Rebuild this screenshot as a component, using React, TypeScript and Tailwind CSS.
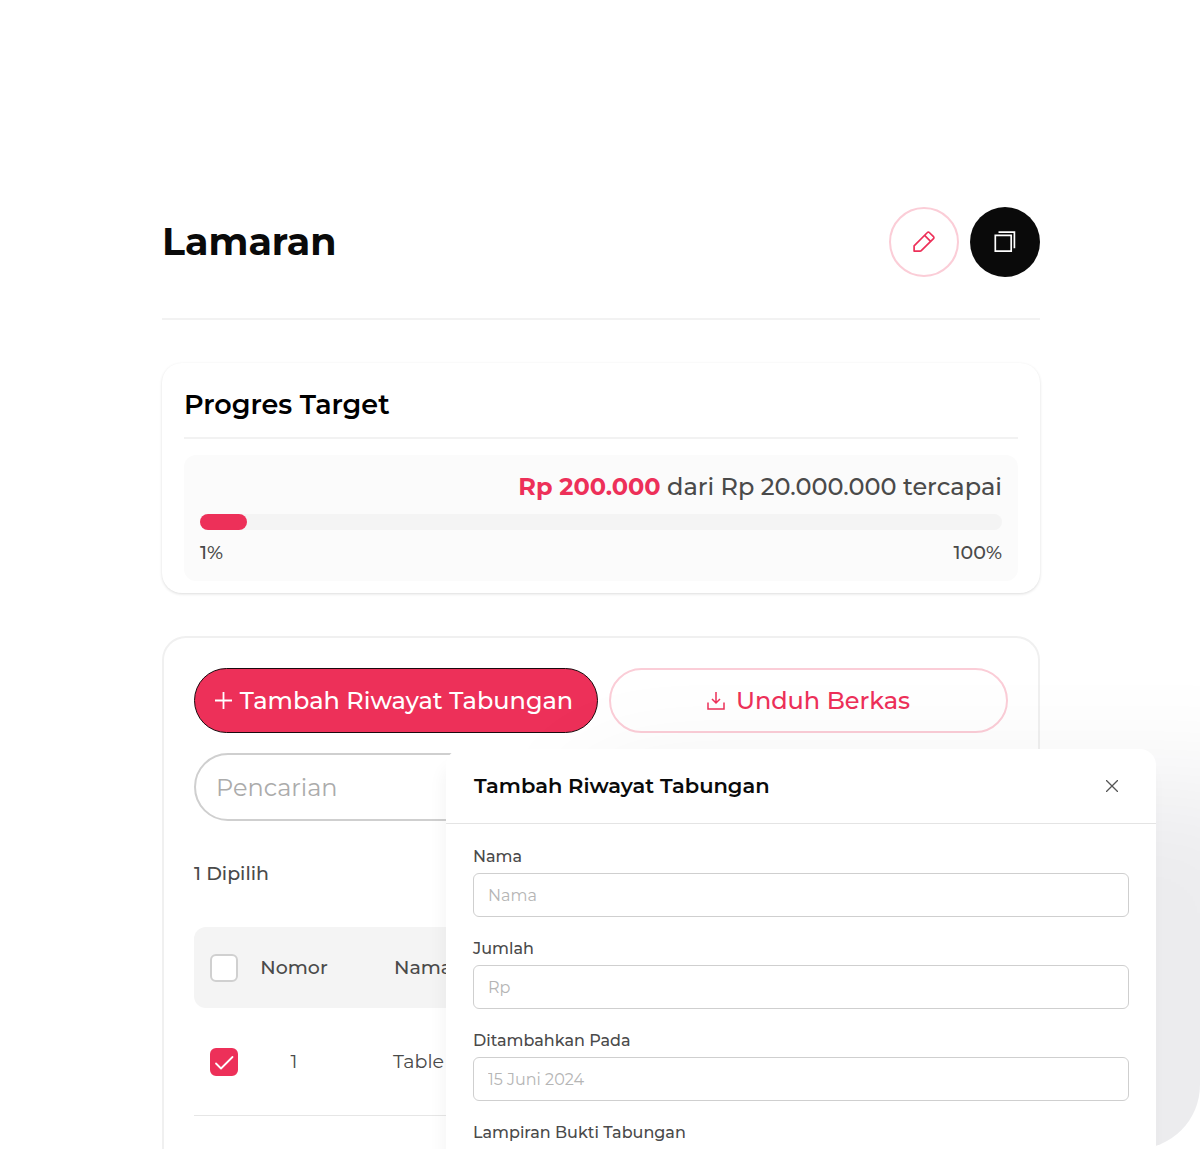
import { useState } from 'react'

type Row = {
  id: number
  name: string
}

const rows: Row[] = [{ id: 1, name: 'Table' }]

const fields = [
  { id: 'nama', label: 'Nama', placeholder: 'Nama' },
  { id: 'jumlah', label: 'Jumlah', placeholder: 'Rp' },
  { id: 'tanggal', label: 'Ditambahkan Pada', placeholder: '15 Juni 2024' },
]

function PencilIcon() {
  return (
    <svg width="24" height="24" viewBox="0 0 24 24" fill="none" stroke="currentColor" strokeWidth="1.7" strokeLinejoin="round">
      <path d="M2.100 20.900v-5.100L15.400 2.500a1.300 1.300 0 0 1 1.900 0l4.200 4.200a1.300 1.300 0 0 1 0 1.900L9 20.900a1.500 1.500 0 0 1-.8.300H2.400a.3.3 0 0 1-.3-.3Z" />
      <path d="m12.600 5.300 6 6" />
    </svg>
  )
}

function CopyIcon() {
  return (
    <svg width="24" height="24" viewBox="0 0 24 24" fill="none" stroke="currentColor" strokeWidth="1.700">
      <path d="M2.300 5.300h15.900v15.900H2.300Z" />
      <path d="M5.500 2.200h15.900v16" />
    </svg>
  )
}

function Checkbox({ checked, onChange, label }: { checked: boolean; onChange: () => void; label: string }) {
  return (
    <span className="relative block size-7">
      <input
        type="checkbox"
        aria-label={label}
        checked={checked}
        onChange={onChange}
        className="block size-7 appearance-none rounded-md border-2 border-[#d0d0d0] bg-white checked:border-[#ed3059] checked:bg-[#ed3059]"
      />
      {checked && (
        <svg className="pointer-events-none absolute inset-0 text-white" width="28" height="28" viewBox="0 0 28 28" fill="none" stroke="currentColor" strokeWidth="1.800" strokeLinecap="round" strokeLinejoin="round">
          <path d="m6 15.500 5 5L22.500 9" />
        </svg>
      )}
    </span>
  )
}

export default function App() {
  const [selected, setSelected] = useState<number[]>([1])

  const toggle = (id: number) => {
    setSelected(selected.includes(id) ? selected.filter(s => s !== id) : [...selected, id])
  }

  return (
    <main className="relative flex min-h-screen flex-col overflow-hidden rounded-br-[64px] bg-white pt-[207px] pr-40 pl-[162px] font-['Montserrat','Inter',sans-serif] text-[#4a4a4a]">
      <header className="flex items-center justify-between border-b-2 border-[#f2f2f2] pb-[41px]">
        <h1 className="text-[38px] leading-[48px] font-bold text-[#0a0a0a]">Lamaran</h1>
        <div className="flex gap-[11px]">
          <button aria-label="Ubah" className="flex size-[70px] items-center justify-center rounded-full border-2 border-[#fbcdd7] text-[#ed3059]">
            <PencilIcon />
          </button>
          <button aria-label="Salin" className="flex size-[70px] items-center justify-center rounded-full bg-[#0a0a0a] text-white">
            <CopyIcon />
          </button>
        </div>
      </header>

      <section className="mt-[43px] rounded-[20px] bg-white px-[22px] pt-6 pb-3 shadow-[0_1px_3px_rgba(0,0,0,0.14)]">
        <h2 className="border-b-2 border-[#f2f2f2] pb-[14px] text-[27px] leading-9 font-semibold text-black">Progres Target</h2>
        <div className="mt-4 rounded-xl bg-[#fbfbfb] px-4 pt-4 pb-[14px]">
          <p className="text-right text-[24px] leading-8 font-medium">
            <strong className="font-bold text-[#ed3059]">Rp 200.000</strong> dari Rp 20.000.000 tercapai
          </p>
          <div className="mt-[11px] h-4 rounded-full bg-[#f4f4f4]">
            <div className="h-4 w-[47px] rounded-full bg-[#ed3059]" />
          </div>
          <div className="mt-[9px] flex justify-between text-[19px] leading-7 font-medium">
            <span>1%</span>
            <span>100%</span>
          </div>
        </div>
      </section>

      <section className="mt-[43px] flex-1 rounded-t-3xl border-2 border-b-0 border-[#f0f0f0] px-[30px] pt-[30px]">
        <div className="flex gap-[11px]">
          <button className="flex h-[65px] w-[404px] items-center justify-center gap-2 rounded-full border border-[#1a0a0e] bg-[#ed3059] pr-1 text-[24px] font-medium text-white">
            <svg width="17" height="17" viewBox="0 0 17 17" stroke="currentColor" strokeWidth="1.800">
              <path d="M8.500 0v17M0 8.500h17" />
            </svg>
            Tambah Riwayat Tabungan
          </button>
          <button className="flex h-[65px] flex-1 items-center justify-center gap-[11px] rounded-full border-2 border-[#fbcdd7] text-[24px] font-medium text-[#ed3059]">
            <svg width="18" height="18" viewBox="0 0 18 18" fill="none" stroke="currentColor" strokeWidth="1.500">
              <path d="M9 0v11M5 7l4 4 4-4M1 10.500V17h16v-6.500" />
            </svg>
            Unduh Berkas
          </button>
        </div>

        <input
          type="search"
          aria-label="Pencarian"
          placeholder="Pencarian"
          className="mt-5 block h-[68px] w-full rounded-full border-2 border-[#cfcfcf] px-5 text-[24px] placeholder:text-[#ababab]"
        />

        <p className="mt-[39px] text-[19px] leading-7 font-medium">{selected.length} Dipilih</p>

        <table className="mt-[39px] w-full table-fixed border-separate border-spacing-0 text-[19px]">
          <thead>
            <tr className="h-[81px]">
              <th className="w-[60px] rounded-l-xl bg-[#f4f4f4] pl-4">
                <Checkbox
                  label="Pilih semua"
                  checked={selected.length > rows.length}
                  onChange={() => setSelected(selected.length ? [] : rows.map(r => r.id))}
                />
              </th>
              <th className="w-20 bg-[#f4f4f4] pt-0.5 font-medium">Nomor</th>
              <th className="rounded-r-xl bg-[#f4f4f4] pt-0.5 pl-[60px] text-left font-medium">Nama</th>
            </tr>
          </thead>
          <tbody>
            {rows.map(row => (
              <tr key={row.id} className="h-[108px]">
                <td className="border-b border-[#e6e6e6] pl-4">
                  <Checkbox label={`Pilih ${row.name}`} checked={selected.includes(row.id)} onChange={() => toggle(row.id)} />
                </td>
                <td className="border-b border-[#e6e6e6] pt-0.5 text-center">{row.id}</td>
                <td className="border-b border-[#e6e6e6] pt-0.5 pl-[59px]">{row.name}</td>
              </tr>
            ))}
          </tbody>
        </table>
      </section>

      <div
        role="dialog"
        aria-labelledby="dialog-title"
        className="absolute top-[749px] right-11 -bottom-40 left-[446px] rounded-t-2xl bg-white shadow-[140px_32px_120px_rgba(5,18,43,0.08),-4px_16px_16px_rgba(0,0,0,0.04)]"
      >
        <div className="flex h-[75px] items-center justify-between border-b border-[#e4e4e4] pr-[38px] pl-7">
          <h2 id="dialog-title" className="text-[21px] leading-8 font-semibold text-[#0a0a0a]">Tambah Riwayat Tabungan</h2>
          <button aria-label="Tutup">
            <svg width="12" height="12" viewBox="0 0 12 12" stroke="#555" strokeWidth="1.300">
              <path d="m0 0 12 12M12 0 0 12" />
            </svg>
          </button>
        </div>
        <form className="flex flex-col gap-5 px-[27px] pt-[21px] text-[16px]">
          {fields.map(field => (
            <div key={field.id} className="flex flex-col gap-1">
              <label htmlFor={field.id} className="leading-6 font-medium">{field.label}</label>
              <input
                id={field.id}
                placeholder={field.placeholder}
                className="h-11 w-full rounded-md border border-[#cfcfcf] px-3.5 placeholder:text-[#b5b5b5]"
              />
            </div>
          ))}
          <p className="leading-6 font-medium">Lampiran Bukti Tabungan</p>
        </form>
      </div>
    </main>
  )
}
